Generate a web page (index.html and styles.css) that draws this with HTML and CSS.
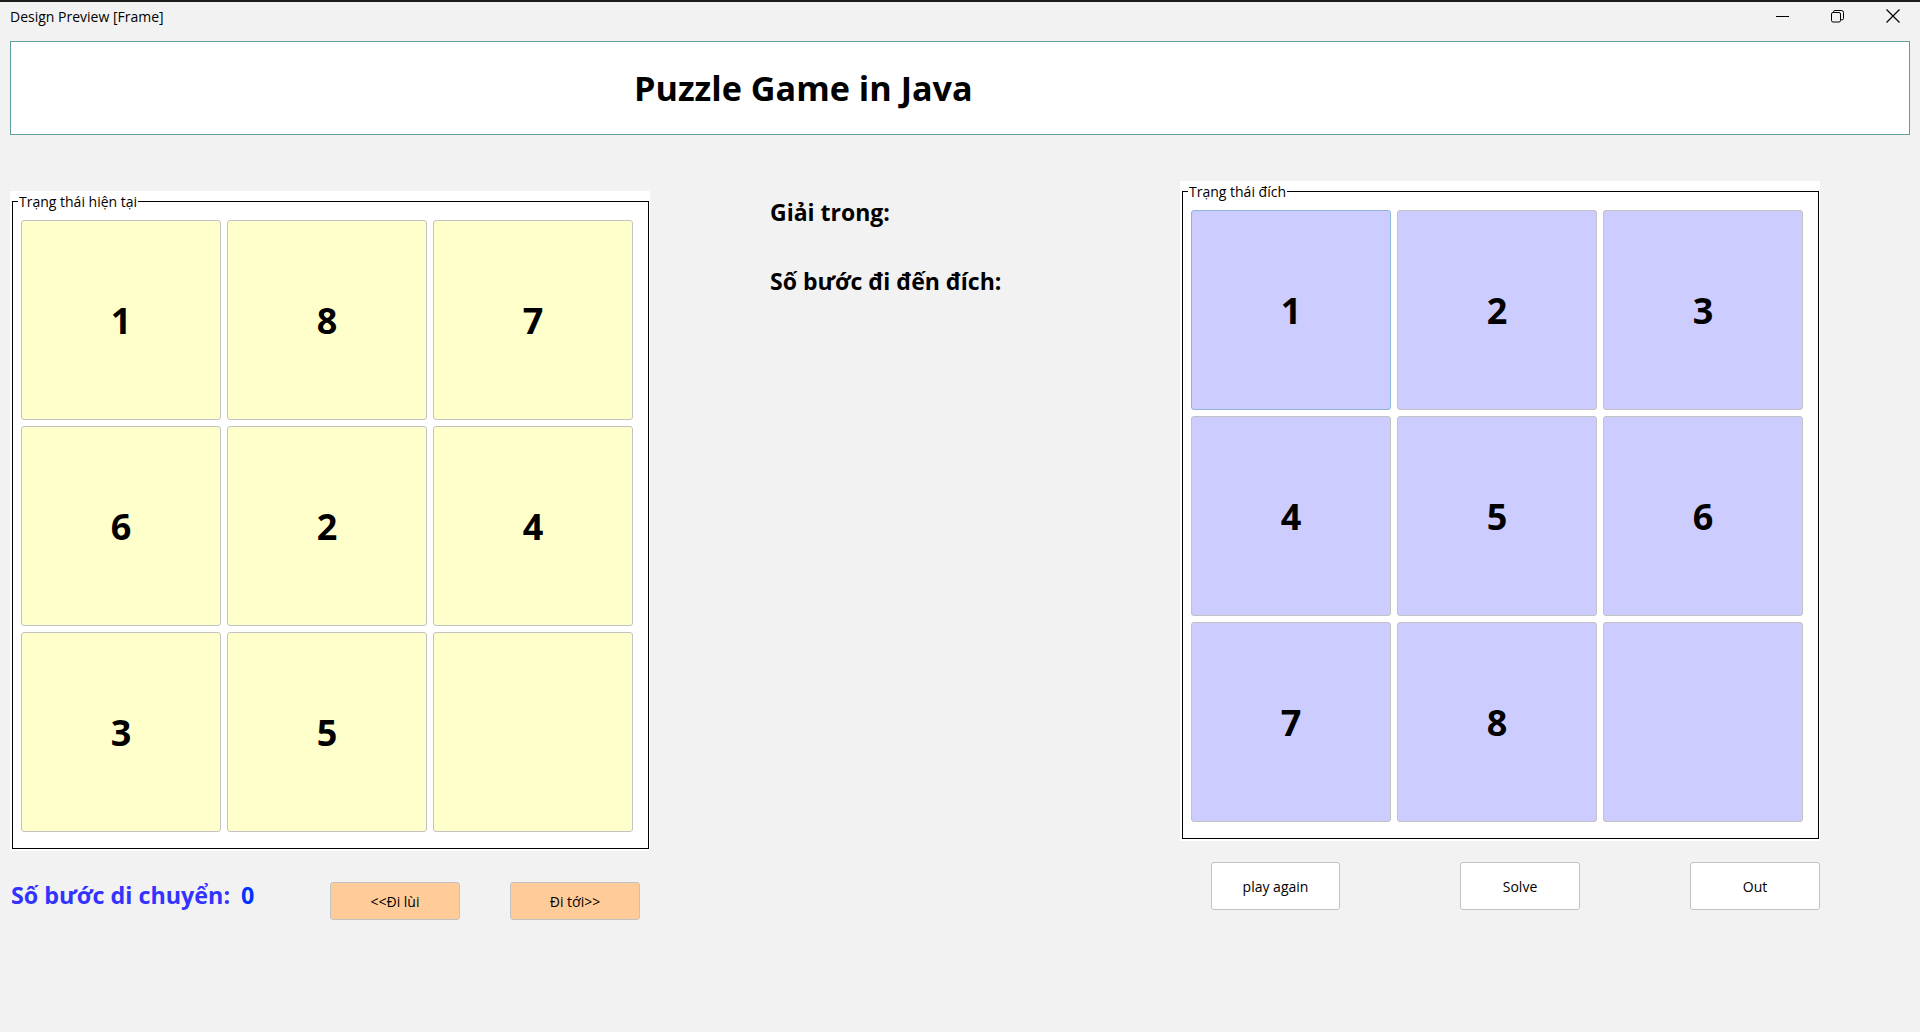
FILE: index.html
```html
<!DOCTYPE html>
<html lang="vi">
<head>
<meta charset="utf-8">
<title>Design Preview [Frame]</title>
<link rel="stylesheet" href="styles.css">
</head>
<body>
<div class="titlebar">
  <span class="title">Design Preview [Frame]</span>
  <div class="controls">
    <span class="ctl"><svg width="13" height="3" viewBox="0 0 13 3"><line x1="0" y1="1.5" x2="13" y2="1.5" stroke="#000" stroke-width="1"/></svg></span>
    <span class="ctl"><svg width="14" height="13" viewBox="0 0 14 13"><rect x="0.5" y="2.5" width="9" height="9.5" rx="1.5" fill="none" stroke="#000"/><path d="M2.5 2.5 V1.8 Q2.5 0.5 3.8 0.5 H10.5 Q12.5 0.5 12.5 2.5 V8.5 Q12.5 9.8 11.2 9.8 H9.5" fill="none" stroke="#000"/></svg></span>
    <span class="ctl"><svg width="14" height="14" viewBox="0 0 14 14"><path d="M0.5 0.5 L13.5 13.5 M13.5 0.5 L0.5 13.5" stroke="#000" stroke-width="1.2"/></svg></span>
  </div>
</div>

<header class="banner">
  <h1>Puzzle Game in Java</h1>
</header>

<main class="content">
  <section class="col col-left">
    <div class="panel">
      <div class="board">
        <span class="legend">Trạng thái hiện tại</span>
        <div class="grid">
          <button class="tile tile-cur">1</button>
          <button class="tile tile-cur">8</button>
          <button class="tile tile-cur">7</button>
          <button class="tile tile-cur">6</button>
          <button class="tile tile-cur">2</button>
          <button class="tile tile-cur">4</button>
          <button class="tile tile-cur">3</button>
          <button class="tile tile-cur">5</button>
          <button class="tile tile-cur"></button>
        </div>
      </div>
    </div>
    <div class="moves">
      <div class="moves-text"><span class="moves-label">Số bước di chuyển:</span><span class="moves-val">0</span></div>
      <button class="btn btn-nav">&lt;&lt;Đi lùi</button>
      <button class="btn btn-nav btn-next">Đi tới&gt;&gt;</button>
    </div>
  </section>

  <section class="col col-mid">
    <p class="info">Giải trong:</p>
    <p class="info">Số bước đi đến đích:</p>
  </section>

  <section class="col col-right">
    <div class="panel">
      <div class="board">
        <span class="legend">Trạng thái đích</span>
        <div class="grid">
          <button class="tile tile-goal tile-focus">1</button>
          <button class="tile tile-goal">2</button>
          <button class="tile tile-goal">3</button>
          <button class="tile tile-goal">4</button>
          <button class="tile tile-goal">5</button>
          <button class="tile tile-goal">6</button>
          <button class="tile tile-goal">7</button>
          <button class="tile tile-goal">8</button>
          <button class="tile tile-goal"></button>
        </div>
      </div>
    </div>
    <div class="actions">
      <button class="btn btn-play">play again</button>
      <button class="btn btn-solve">Solve</button>
      <button class="btn btn-out">Out</button>
    </div>
  </section>
</main>
</body>
</html>
```

FILE: styles.css
```css
* { box-sizing: border-box; }
html, body { margin: 0; padding: 0; }
body {
  width: 1920px;
  height: 1032px;
  overflow: hidden;
  background: #f2f2f2;
  color: #000;
  font-family: "Open Sans", "Noto Sans", sans-serif;
}

.titlebar {
  height: 30px;
  border-top: 2px solid #1c1c1c;
  display: flex;
  align-items: center;
  justify-content: space-between;
}
.title {
  font-size: 14px;
  padding-left: 10px;
  margin-top: 1px;
}
.controls { display: flex; height: 28px; }
.ctl {
  width: 55px;
  display: flex;
  align-items: center;
  justify-content: center;
}

.banner {
  margin: 11px 10px 0;
  height: 94px;
  border: 1px solid #5f9ea0;
  background: #fff;
  display: flex;
  align-items: center;
  padding-left: 623px;
}
.banner h1 {
  margin: 0;
  font-size: 34.2px;
  font-weight: 700;
  line-height: 44px;
}

.content {
  display: flex;
  align-items: flex-start;
  padding: 46px 0 0 10px;
}
.col-left { width: 640px; margin-top: 10px; }
.col-mid {
  width: 410px;
  margin-left: 120px;
  padding-top: 17px;
  display: flex;
  flex-direction: column;
  gap: 41px;
}
.col-right { width: 640px; }

.panel {
  background: #fff;
  height: 660px;
  padding: 10px 1px 2px 2px;
}
.board {
  position: relative;
  height: 648px;
  border: 1px solid #000;
  padding: 18px 15px 16px 8px;
}
.legend {
  position: absolute;
  left: 5px;
  top: -8px;
  padding: 0 1px;
  background: #fff;
  font-size: 14px;
  line-height: 16px;
}
.grid {
  display: grid;
  grid-template-columns: repeat(3, 200px);
  grid-auto-rows: 200px;
  gap: 6px;
}
.tile {
  margin: 0;
  padding: 0;
  border: 1px solid #c2c2c2;
  border-radius: 3px;
  font-family: inherit;
  font-size: 36px;
  font-weight: 700;
  color: #000;
}
.tile-cur { background: #ffffcc; }
.tile-goal { background: #ccccff; }
.tile-focus { border-color: #8fb4dc; }

.info {
  margin: 0;
  font-size: 23px;
  font-weight: 700;
  line-height: 28px;
}

.moves {
  margin-top: 31px;
  display: flex;
  align-items: flex-start;
  height: 38px;
}
.moves-text {
  width: 320px;
  margin-top: -2px;
  padding-left: 1px;
  font-size: 23.3px;
  font-weight: 700;
  line-height: 30px;
  white-space: nowrap;
}
.moves-label { color: #3333ff; margin-right: 11px; }
.moves-val { color: #0033ff; }

.btn {
  margin: 0;
  padding: 0;
  border: 1px solid #c2c2c2;
  border-radius: 3px;
  font-family: inherit;
  font-size: 14px;
  color: #000;
  background: #fff;
}
.btn-nav { width: 130px; height: 38px; background: #ffcc99; }
.btn-next { margin-left: 50px; }

.actions {
  margin-top: 21px;
  display: flex;
  padding-left: 31px;
}
.actions .btn { height: 48px; }
.btn-play { width: 129px; }
.btn-solve { width: 120px; margin-left: 120px; }
.btn-out { width: 130px; margin-left: 110px; }
```
